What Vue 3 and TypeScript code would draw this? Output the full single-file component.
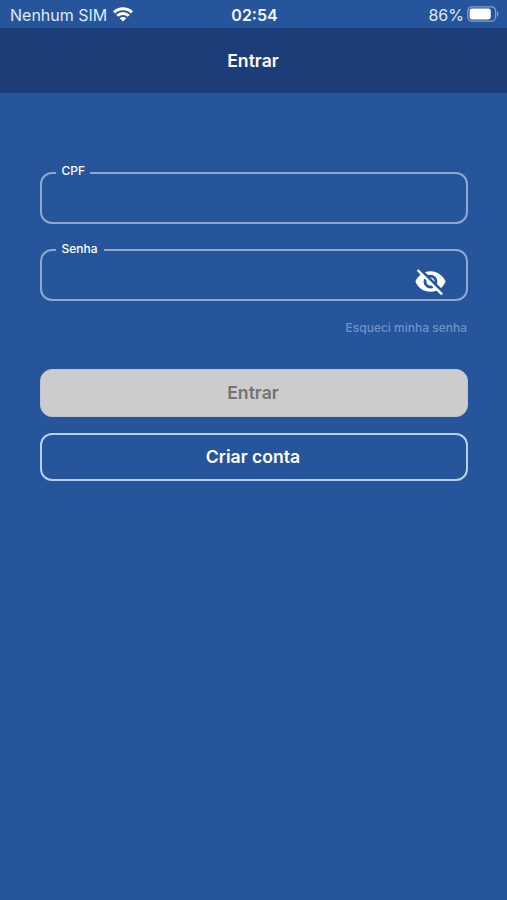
<script setup lang="ts">
import { ref } from 'vue'

const cpf = ref<string>('')
const password = ref<string>('')
const hidden = ref<boolean>(true)
</script>

<template>
  <div class="screen">
    <div class="status">
      <div class="carrier">
        <span class="carrier-name">Nenhum SIM</span>
        <svg class="wifi" viewBox="0 0 20 15">
          <g fill="none" stroke="#fff" stroke-width="2.9">
            <path d="M1 5.4C6 .6 14 .6 19 5.4" />
            <path d="M4.2 8.8c3.3-3.1 8.3-3.1 11.6 0" />
          </g>
          <path d="M10 14.6 6.7 11.3c1.9-1.7 4.7-1.7 6.6 0z" fill="#fff" />
        </svg>
      </div>
      <span class="clock">02:54</span>
      <div class="power">
        <span class="percent">86%</span>
        <svg class="battery" viewBox="0 0 32 16">
          <rect x=".8" y=".8" width="27.8" height="14.4" rx="4.2" fill="none" stroke="#839fce" stroke-width="1.3" />
          <rect x="2.6" y="2.6" width="21.2" height="10.8" rx="2.4" fill="#fff" />
          <path d="M30 5.3c1.9.9 1.9 4.5 0 5.4z" fill="#839fce" />
        </svg>
      </div>
    </div>
    <header class="bar"><h1>Entrar</h1></header>
    <form class="form" @submit.prevent>
      <fieldset class="field">
        <legend class="cpf">CPF</legend>
        <input v-model="cpf" type="text" inputmode="numeric" />
      </fieldset>
      <fieldset class="field">
        <legend class="senha">Senha</legend>
        <input v-model="password" :type="hidden ? 'password' : 'text'" />
        <button class="eye" type="button" @click="hidden = !hidden">
          <svg viewBox="0 0 24 24" fill="#fff">
            <path d="M12 7c2.760 0 5 2.240 5 5 0 .65-.13 1.260-.36 1.830l2.920 2.920c1.510-1.260 2.700-2.890 3.430-4.750-1.730-4.390-6-7.500-11-7.500-1.400 0-2.740.25-3.980.7l2.160 2.160C10.740 7.130 11.350 7 12 7zM2 4.270l2.280 2.280.46.460C3.080 8.300 1.780 10.020 1 12c1.730 4.390 6 7.500 11 7.500 1.550 0 3.030-.3 4.380-.84l.42.420L19.730 22 21 20.730 3.270 3 2 4.270zM7.530 9.800l1.550 1.550c-.05.210-.08.430-.08.650 0 1.660 1.340 3 3 3 .22 0 .44-.03.650-.08l1.550 1.550c-.67.330-1.410.530-2.200.53-2.760 0-5-2.240-5-5 0-.79.2-1.530.53-2.200zm4.310-.78l3.150 3.150.02-.16c0-1.660-1.340-3-3-3l-.17.01z" />
          </svg>
        </button>
      </fieldset>
      <a class="forgot">Esqueci minha senha</a>
      <button class="btn submit" type="submit" disabled><span>Entrar</span></button>
      <button class="btn create" type="button"><span>Criar conta</span></button>
    </form>
  </div>
</template>

<style>
body {
  background: #26559b;
}
</style>

<style scoped>
.screen {
  box-sizing: border-box;
  height: 900px;
  background: #26559b;
  color: #fff;
  font-family: Inter, 'Liberation Sans', sans-serif;
}
.status {
  display: grid;
  grid-template-columns: 1fr auto 1fr;
  align-items: center;
  height: 28px;
  padding: 2px 8px 0 10px;
  box-sizing: border-box;
  font-size: 16px;
  line-height: 26px;
  color: #dfe9f9;
}
.carrier,
.power {
  display: flex;
  align-items: center;
}
.carrier {
  gap: 6px;
}
.carrier-name {
  width: 97px;
  white-space: nowrap;
}
.power {
  justify-content: flex-end;
  gap: 3px;
}
.wifi {
  width: 20px;
  height: 15px;
  margin-top: -1px;
}
.battery {
  width: 32px;
  height: 16px;
  margin-top: -2px;
}
.clock {
  font-weight: 600;
  color: #f1f6ff;
}
.bar {
  display: flex;
  align-items: center;
  justify-content: center;
  box-sizing: border-box;
  height: 64.5px;
  padding: 2px 1px 0 0;
  background: #1d3d78;
}
h1 {
  margin: 0;
  font-size: 17.6px;
  font-weight: 600;
  line-height: 24px;
}
.form {
  display: flex;
  flex-direction: column;
  padding: 73.5px 39px 0 40px;
}
.field {
  box-sizing: border-box;
  display: flex;
  justify-content: space-between;
  min-width: 0;
  height: 58px;
  margin: 0 0 19px;
  padding: 0 20px 0 14px;
  border: 2px solid #8ea8d0;
  border-radius: 12px;
}
legend {
  box-sizing: border-box;
  height: 14px;
  padding: 0 0 3px 5.5px;
  font-size: 12px;
  font-weight: 500;
  line-height: 11px;
  white-space: nowrap;
}
.cpf {
  width: 34px;
  line-height: 9px;
}
.senha {
  width: 48px;
}
input {
  flex: 1;
  min-width: 0;
  height: 40px;
  padding: 0;
  border: 0;
  outline: 0;
  background: none;
  color: #fff;
  font: 16px Inter, sans-serif;
}
.eye {
  width: 33px;
  height: 33px;
  margin: 8px -1px 0 0;
  padding: 0;
  border: 0;
  background: none;
}
.eye svg {
  display: block;
  width: 33px;
  height: 33px;
}
.forgot {
  align-self: flex-end;
  margin: 0 1px 33px 0;
  font-size: 12px;
  font-weight: 500;
  line-height: 16px;
  color: #7192c7;
}
.btn {
  box-sizing: border-box;
  height: 48px;
  margin: 0 0 16px;
  padding: 0 2px 0 0;
  border-radius: 12px;
  font: 600 17.6px/24px Inter, sans-serif;
}
.submit {
  border: 1px solid #b9c3d3;
  background: #cccccc;
  color: #737373;
}
.create {
  border: 2px solid #b9cff1;
  background: none;
  color: #fff;
}
</style>
